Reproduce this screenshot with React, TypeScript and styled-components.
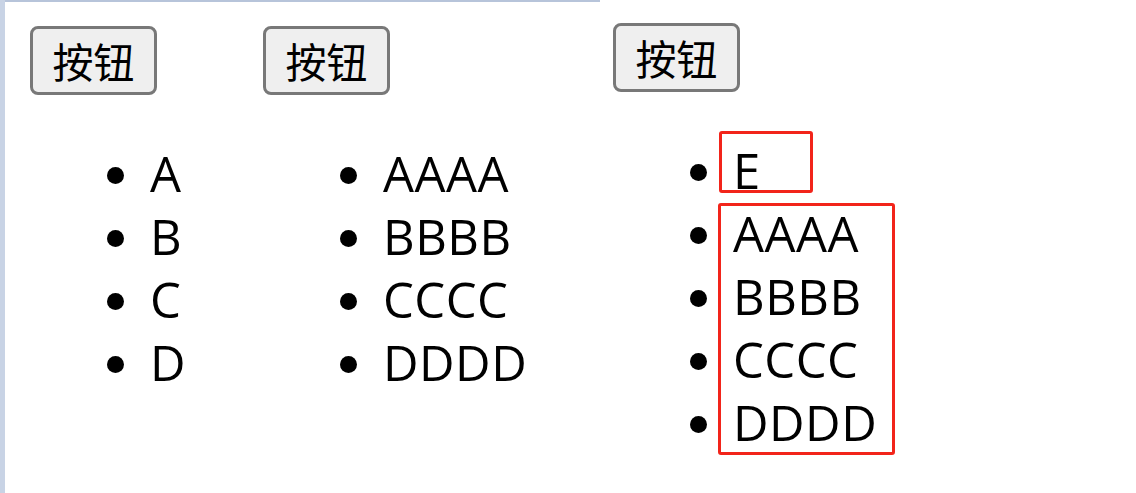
import React from "react";
import styled, { createGlobalStyle } from "styled-components";

const Global = createGlobalStyle`
  html, body { margin: 0; padding: 0; background: #ffffff; }
  body { font-family: "Open Sans", "Noto Sans CJK SC", sans-serif; color: #000; }
`;

const Frame = styled.div`
  min-height: 493px;
  border-left: 5px solid #c8d3e5;
  box-sizing: border-box;
  display: flex;
  flex-direction: column;
`;

const TopRule = styled.div`
  width: 595px;
  height: 2px;
  background: #b7c4da;
`;

const Columns = styled.div`
  display: grid;
  grid-template-columns: 233px 350px 1fr;
  padding-left: 25px;
`;

const Column = styled.div<{ $lift?: number }>`
  display: flex;
  flex-direction: column;
  align-items: flex-start;
  padding-top: ${(p) => 24 - (p.$lift ?? 0)}px;
`;

const Button = styled.button`
  width: 127px;
  height: 69px;
  box-sizing: border-box;
  padding: 0;
  border: 3px solid #787878;
  border-radius: 8px;
  background: #efefef;
  font-family: "Noto Sans CJK SC", sans-serif;
  font-size: 41px;
  line-height: 1;
  color: #000;
  display: flex;
  align-items: center;
  justify-content: center;
`;

const List = styled.ul<{ $gap?: number }>`
  margin: ${(p) => p.$gap ?? 0}px 0 0 0;
  padding: 0 0 0 120px;
  font-size: 49px;
  line-height: 63px;
  letter-spacing: 0.5px;
  list-style: none;
`;

const BoxedList = styled(List)`
  position: relative;
  &::after {
    content: "";
    position: absolute;
    left: 105px;
    top: 0;
    width: 177px;
    height: 252px;
    box-sizing: border-box;
    border: 3px solid #f2241a;
    border-radius: 3px;
    pointer-events: none;
  }
`;

const Item = styled.li`
  position: relative;
  top: -1px;
  &::before {
    content: "";
    position: absolute;
    left: -43px;
    top: 25px;
    width: 17px;
    height: 17px;
    border-radius: 50%;
    background: #000;
  }
`;

const Flagged = styled.span`
  position: relative;
  &::after {
    content: "";
    position: absolute;
    left: -14px;
    top: -6px;
    width: 94px;
    height: 62px;
    box-sizing: border-box;
    border: 3px solid #f2241a;
    border-radius: 3px;
    pointer-events: none;
  }
`;

const short = ["A", "B", "C", "D"];
const long = ["AAAA", "BBBB", "CCCC", "DDDD"];

export default function App() {
  return (
    <>
      <Global />
      <Frame>
        <TopRule />
        <Columns>
          <Column>
            <Button>按钮</Button>
            <List $gap={48}>
              {short.map((t) => (
                <Item key={t}>{t}</Item>
              ))}
            </List>
          </Column>
          <Column>
            <Button>按钮</Button>
            <List $gap={48}>
              {long.map((t) => (
                <Item key={t}>{t}</Item>
              ))}
            </List>
          </Column>
          <Column $lift={3}>
            <Button>按钮</Button>
            <List $gap={48}>
              <Item>
                <Flagged>E</Flagged>
              </Item>
            </List>
            <BoxedList>
              {long.map((t) => (
                <Item key={t}>{t}</Item>
              ))}
            </BoxedList>
          </Column>
        </Columns>
      </Frame>
    </>
  );
}
